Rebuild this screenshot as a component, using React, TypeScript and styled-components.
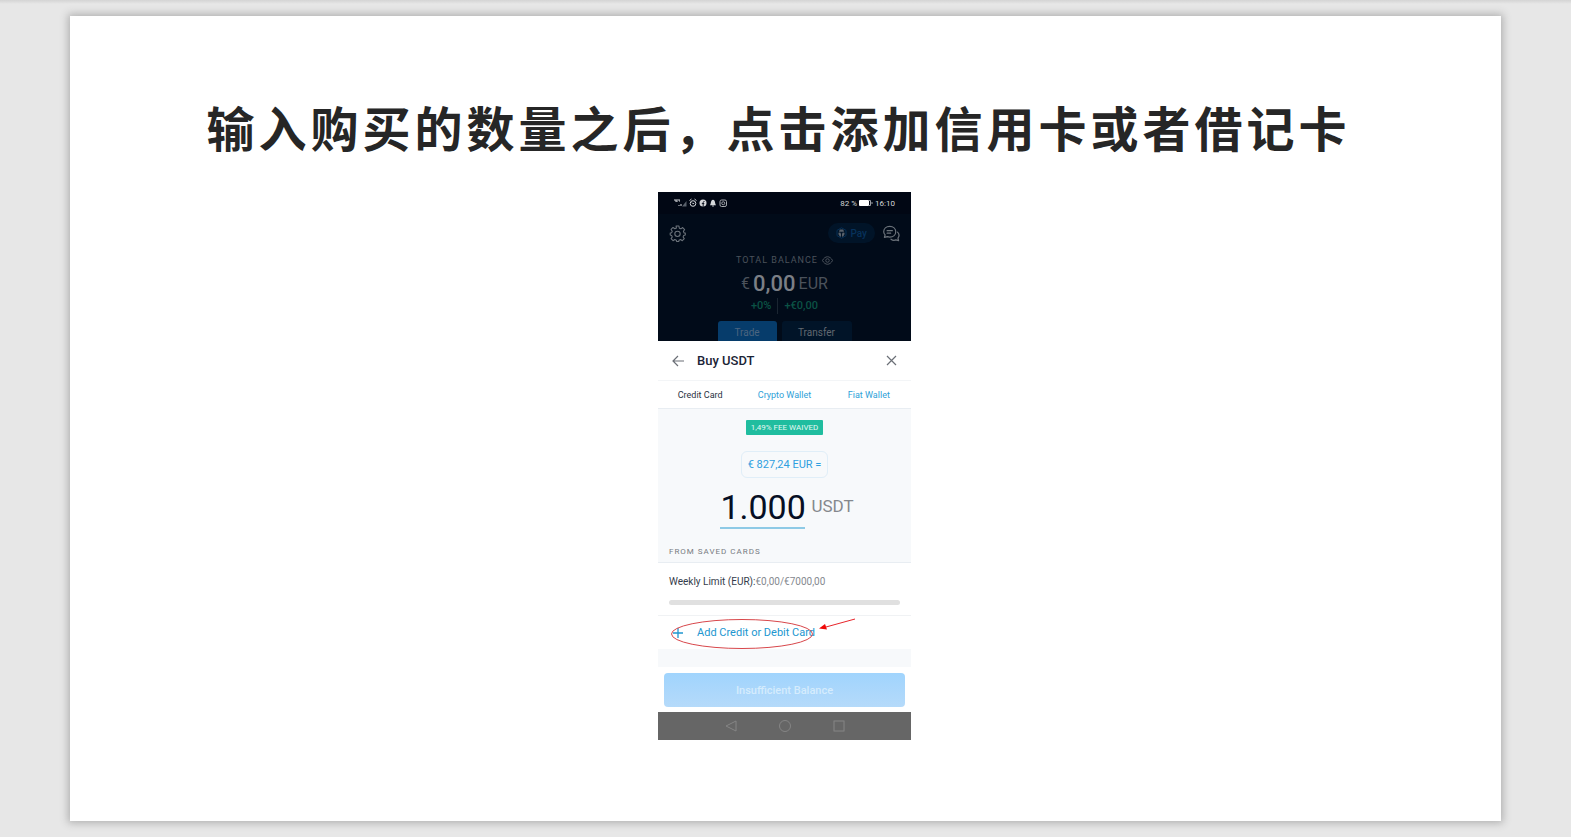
import React from 'react';
import styled, { createGlobalStyle } from 'styled-components';

const GlobalStyle = createGlobalStyle`
  *, *::before, *::after { box-sizing: border-box; }
  body {
    margin: 0;
    background: #e7e7e7;
    font-family: Roboto, "Noto Sans CJK SC", sans-serif;
  }
  button, input { font: inherit; margin: 0; padding: 0; border: 0; background: none; color: inherit; }
  a { color: inherit; text-decoration: none; }
  svg { display: block; fill: none; stroke: currentColor; }
`;

const Stage = styled.main`
  padding: 16px 70px;
  background: linear-gradient(#d4d4d4, #e7e7e7 4px);
`;

const Slide = styled.section`
  display: flex;
  flex-direction: column;
  align-items: center;
  aspect-ratio: 16 / 9;
  padding: 72px 0 0;
  background: #fff;
  box-shadow: 0 0 8px 2px #b0b0b0;
`;

const Title = styled.h1`
  margin: 0;
  padding-right: 14px;
  color: #262626;
  font: 700 48px/76px "Noto Sans CJK SC", sans-serif;
  letter-spacing: 4px;
  white-space: nowrap;
`;

const Phone = styled.article`
  display: flex;
  flex-direction: column;
  position: relative;
  width: 253px;
  margin-top: 28px;
  margin-right: 2px;
  background: #fff;
`;

const Backdrop = styled.header`
  height: 149px;
  overflow: hidden;
  background: #010b19;
  color: #4b525b;
  display: flex;
  flex-direction: column;
  align-items: center;
`;

const Row = styled.div`
  display: flex;
  align-items: center;
  width: 100%;
`;

const StatusBar = styled(Row)`
  justify-content: space-between;
  flex-shrink: 0;
  height: 22px;
  padding: 0 16px;
  background: #010714;
  color: #d5d7da;
  font-size: 8px;
`;

const StatusGroup = styled.span`
  display: flex;
  align-items: center;
  gap: 2px;
`;

const Toolbar = styled(Row)`
  flex-shrink: 0;
  height: 38px;
  padding: 0 11px;
  color: #6c737b;
`;

const IconButton = styled.button`
  display: grid;
  place-items: center;
  cursor: pointer;
`;

const PayButton = styled.button`
  display: flex;
  align-items: center;
  gap: 3px;
  height: 20px;
  margin-left: auto;
  margin-right: 8px;
  padding: 0 8px;
  border-radius: 10px;
  background: #011428;
  color: #07315a;
  font-size: 10px;
  font-weight: 500;
`;

const BalanceLabel = styled.div`
  display: flex;
  align-items: center;
  gap: 4px;
  flex-shrink: 0;
  height: 16px;
  font-size: 9px;
  letter-spacing: 1px;
`;

const Balance = styled.div`
  display: flex;
  align-items: center;
  gap: 3px;
  flex-shrink: 0;
  height: 30px;
  font-size: 16px;
`;

const BalanceAmount = styled.strong`
  color: #7b7f86;
  font-size: 22px;
  font-weight: 500;
`;

const Change = styled.div`
  display: flex;
  flex-shrink: 0;
  height: 16px;
  color: #0b5245;
  font-size: 11px;
  font-weight: 500;
  line-height: 16px;
`;

const ChangePart = styled.span<{ $divided?: boolean }>`
  padding: 0 6px;
  border-left: ${(p) => (p.$divided ? '1px solid #1a2531' : '0')};
`;

const Modes = styled.div`
  display: flex;
  gap: 5px;
  margin-top: 7px;
`;

const ModeButton = styled.button<{ $active?: boolean }>`
  width: ${(p) => (p.$active ? 59 : 70)}px;
  height: 22px;
  border-radius: 3px;
  background: ${(p) => (p.$active ? '#063c6b' : '#011428')};
  color: ${(p) => (p.$active ? '#4b6580' : '#626971')};
  font-size: 10px;
`;

const SheetHeader = styled(Row)`
  height: 40px;
  padding: 0 14px;
  border-bottom: 1px solid #f3f5f7;
  color: #6b6f76;
`;

const SheetTitle = styled.h2`
  margin: 0 auto 0 13px;
  color: #1b2436;
  font-size: 13px;
  font-weight: 500;
`;

const Tabs = styled.nav`
  display: grid;
  grid-template-columns: repeat(3, 1fr);
  height: 28px;
  border-bottom: 1px solid #e8edf2;
  font-size: 9px;
  line-height: 28px;
  text-align: center;
`;

const Tab = styled.a<{ $active?: boolean }>`
  color: ${(p) => (p.$active ? '#2a3242' : '#2f9fd8')};
`;

const Amount = styled.section`
  display: flex;
  flex-direction: column;
  align-items: center;
  height: 154px;
  padding-top: 11px;
  border-bottom: 1px solid #e8edf2;
  background: #f7f9fb;
`;

const Badge = styled.span`
  width: 77px;
  border-radius: 1px;
  background: #20bd9f;
  color: #e4f8f3;
  font-size: 8px;
  line-height: 15px;
  text-align: center;
`;

const QuoteButton = styled.button`
  width: 87px;
  height: 27px;
  margin-top: 16px;
  border: 1px solid #e0eef8;
  border-radius: 6px;
  color: #2f9fe0;
  font-size: 11px;
`;

const AmountField = styled.label`
  display: flex;
  align-items: center;
  gap: 6px;
  margin-top: 9px;
  padding-left: 5px;
  color: #85888d;
  font-size: 17px;
  line-height: 38px;
  align-items: flex-start;
`;

const AmountInput = styled.input`
  width: 85px;
  height: 42px;
  border-bottom: 2px solid #8ecae6;
  color: #060f24;
  font-size: 34px;
  text-align: center;
  outline: 0;
`;

const Caption = styled.h3`
  align-self: flex-start;
  margin: 17px 0 0 11px;
  color: #777b82;
  font-size: 8px;
  font-weight: 400;
  line-height: 12px;
  letter-spacing: 1px;
`;

const Limit = styled.section`
  height: 53px;
  padding: 12px 11px 0;
  border-bottom: 1px solid #f0f2f4;
  color: #343c4a;
  font-size: 10px;
  line-height: 13px;
`;

const Muted = styled.span`
  color: #85898f;
`;

const Track = styled.div`
  height: 5px;
  margin-top: 12px;
  border-radius: 3px;
  background: #e0e0e0;
`;

const AddCard = styled.button`
  display: flex;
  align-items: center;
  gap: 13px;
  height: 33px;
  padding: 0 14px;
  color: #2196cf;
  font-size: 11px;
`;

const Footer = styled.footer`
  padding: 6px 6px 5px;
  border-top: 18px solid #f7f9fb;
`;

const SubmitButton = styled.button`
  width: 100%;
  height: 34px;
  border-radius: 4px;
  background: linear-gradient(#a0d4fd, #b5dafa);
  color: #d5ecfd;
  font-size: 11px;
  font-weight: 500;
`;

const NavBar = styled.nav`
  display: flex;
  justify-content: center;
  align-items: center;
  gap: 42px;
  height: 28px;
  background: #666;
  color: #858585;
`;

const Annotation = styled.svg`
  position: absolute;
  left: 12px;
  top: 425px;
  pointer-events: none;
`;

const StatusIcons = () => (
  <svg width="54" height="10" viewBox="0 0 54 10" aria-hidden="true">
    <path d="M1 1v2h2M3 1v3M5 1v2h1" strokeWidth="1" />
    <path d="M5 8V7M7 8V6" />
    <path d="M8 8.500L12.500 3v5.500z" fill="#59606b" stroke="none" />
    <circle cx="19" cy="5.500" r="2.800" />
    <path d="M15.500 2.500l2-1.500M22.500 2.500l-2-1.500M17.800 4.500l1.200 1.300 1.200-.6" strokeWidth=".9" />
    <circle cx="29" cy="5" r="3.500" fill="currentColor" stroke="none" />
    <path d="M29.200 8.600V4.400q0-1 1.300-.9M27.800 5.600h2.500" stroke="#010714" strokeWidth=".9" />
    <path d="M36 7.200c1.200-1.200.5-5.400 3-5.400s1.800 4.200 3 5.400z" fill="currentColor" stroke="none" />
    <path d="M38.200 8h1.600" />
    <rect x="46" y="2" width="6.500" height="6.500" rx="1.600" stroke="#a9acb1" />
    <circle cx="49.250" cy="5.250" r="1.500" stroke="#a9acb1" strokeWidth=".9" />
  </svg>
);

const Battery = () => (
  <svg width="14" height="6" viewBox="0 0 14 6" aria-hidden="true">
    <rect width="10" height="6" rx="1" fill="#fff" stroke="none" />
    <path d="M10 .5h1.500v5H10M13 2v2" stroke="#9a9da3" />
  </svg>
);

const Gear = () => (
  <svg width="17" height="17" viewBox="0 0 24 24" strokeWidth="1.500" strokeLinejoin="round" aria-hidden="true">
    <path d="M10 1.500h4l.6 3 2.1.9 2.600-1.800 2.800 2.800-1.800 2.600.9 2.100 1.800.3v2.800l-2.200.5-.9 2.100 1.700 2.600-2.800 2.800-2.500-1.700-2.100.9-.5 2.100h-2.800l-.5-2.100-2.200-.9-2.500 1.700-2.800-2.800 1.700-2.600-.9-2.100-2-.5v-2.800l2-.5.9-2.100-1.700-2.500 2.800-2.800 2.600 1.800 2.200-.9z" />
    <circle cx="12" cy="12.500" r="3.800" />
  </svg>
);

const Chat = () => (
  <svg width="17" height="17" viewBox="0 0 24 24" strokeWidth="1.700" strokeLinejoin="round" strokeLinecap="round" aria-hidden="true">
    <path d="M9.500 2C14.500 2 18 5 18 9.500S14.500 17 9.500 17c-1.200 0-2.200-.2-3.200-.6L2 17.500l1-3.500C1.800 12.700 1 11.200 1 9.500 1 5 4.500 2 9.500 2zM5.800 8h7.400M5.800 11.500h5" />
    <path d="M20.500 10c2.300 2.300 2.500 6 .6 8.500l.9 3.500-3.700-1c-2.600 1-5 .6-7-1" />
  </svg>
);

const CoinHex = () => (
  <svg width="11" height="12" viewBox="0 0 22 24" stroke="#59616b" strokeWidth="1.800" aria-hidden="true">
    <path d="M11 1.500l9 5.200v10.600l-9 5.200-9-5.200V6.700z" />
    <path d="M7.500 5h7l1.500 4.500H6zM5 11.500l3.500-.5 1.500 3V19l-2 .5-3-5zM17 11.500l-3.500-.5-1.500 3V19l2 .5 3-5z" fill="#59616b" stroke="none" />
  </svg>
);

const Eye = () => (
  <svg width="11" height="9" viewBox="0 0 22 18" strokeWidth="2" aria-hidden="true">
    <path d="M1 9c5-10 15-10 20 0-5 10-15 10-20 0z" />
    <circle cx="11" cy="9" r="3.500" />
  </svg>
);

export default function App() {
  return (
    <>
      <GlobalStyle />
      <Stage>
        <Slide>
          <Title>输入购买的数量之后，点击添加信用卡或者借记卡</Title>
          <Phone>
            <Backdrop>
              <StatusBar>
                <StatusIcons />
                <StatusGroup>82 % <Battery /> 16:10</StatusGroup>
              </StatusBar>
              <Toolbar>
                <IconButton aria-label="Settings"><Gear /></IconButton>
                <PayButton><CoinHex />Pay</PayButton>
                <IconButton aria-label="Messages"><Chat /></IconButton>
              </Toolbar>
              <BalanceLabel>TOTAL BALANCE <Eye /></BalanceLabel>
              <Balance>€<BalanceAmount>0,00</BalanceAmount>EUR</Balance>
              <Change>
                <ChangePart>+0%</ChangePart>
                <ChangePart $divided>+€0,00</ChangePart>
              </Change>
              <Modes>
                <ModeButton $active>Trade</ModeButton>
                <ModeButton>Transfer</ModeButton>
              </Modes>
            </Backdrop>
            <SheetHeader>
              <IconButton aria-label="Back">
                <svg width="12" height="12" viewBox="0 0 12 12" strokeWidth="1.200"><path d="M12 6H1M6 1L1 6l5 5" /></svg>
              </IconButton>
              <SheetTitle>Buy USDT</SheetTitle>
              <IconButton aria-label="Close">
                <svg width="11" height="11" viewBox="0 0 11 11" strokeWidth="1.200"><path d="M1 1l9 9M10 1l-9 9" /></svg>
              </IconButton>
            </SheetHeader>
            <Tabs>
              <Tab href="#credit" $active>Credit Card</Tab>
              <Tab href="#crypto">Crypto Wallet</Tab>
              <Tab href="#fiat">Fiat Wallet</Tab>
            </Tabs>
            <Amount>
              <Badge>1,49% FEE WAIVED</Badge>
              <QuoteButton>€ 827,24 EUR =</QuoteButton>
              <AmountField>
                <AmountInput defaultValue="1.000" inputMode="decimal" />
                USDT
              </AmountField>
              <Caption>FROM SAVED CARDS</Caption>
            </Amount>
            <Limit>
              Weekly Limit (EUR):<Muted>€0,00/€7000,00</Muted>
              <Track />
            </Limit>
            <AddCard>
              <svg width="12" height="12" viewBox="0 0 12 12" strokeWidth="1.300" aria-hidden="true"><path d="M6 1v10M1 6h10" /></svg>
              Add Credit or Debit Card
            </AddCard>
            <Footer>
              <SubmitButton>Insufficient Balance</SubmitButton>
            </Footer>
            <NavBar>
              <IconButton aria-label="Back">
                <svg width="12" height="12" viewBox="0 0 12 12"><path d="M11 1v10L1 6z" /></svg>
              </IconButton>
              <IconButton aria-label="Home">
                <svg width="12" height="12" viewBox="0 0 12 12"><circle cx="6" cy="6" r="5.500" /></svg>
              </IconButton>
              <IconButton aria-label="Recent apps">
                <svg width="12" height="12" viewBox="0 0 12 12"><rect x="1" y="1" width="10" height="10" /></svg>
              </IconButton>
            </NavBar>
            <Annotation width="186" height="34" viewBox="0 0 186 34" aria-hidden="true">
              <ellipse cx="72" cy="17" rx="70.500" ry="14.500" stroke="#d8474b" />
              <path d="M185 2l-29 8" stroke="#e8252b" />
              <path d="M149 11.500l6-4.500 2 5.500z" fill="#f00808" stroke="none" />
            </Annotation>
          </Phone>
        </Slide>
      </Stage>
    </>
  );
}
